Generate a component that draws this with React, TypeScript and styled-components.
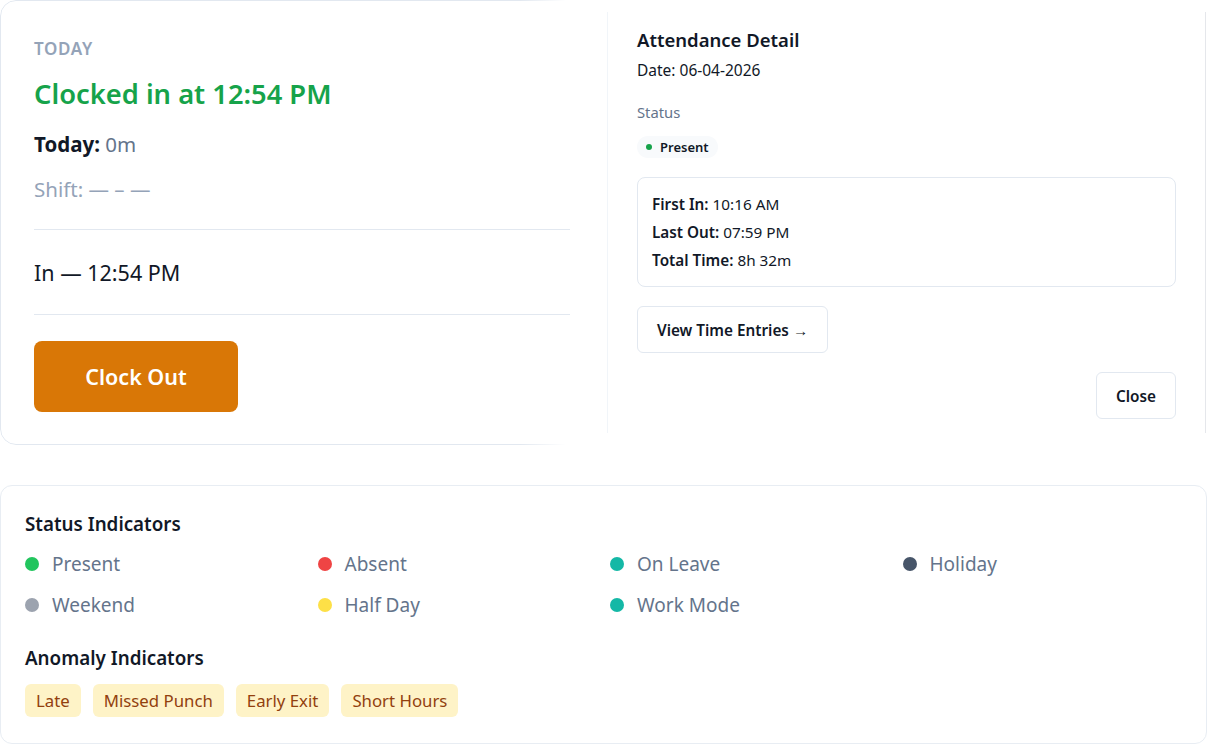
import styled, { createGlobalStyle } from 'styled-components';

const GlobalStyle = createGlobalStyle`
  html, body { margin: 0; padding: 0; background: #fff; }
  body { font-family: "Noto Sans", "Open Sans", sans-serif; color: #111827; }
  * { box-sizing: border-box; }
`;

const Page = styled.div`
  width: 1208px;
  height: 744px;
  overflow: hidden;
  display: flex;
  flex-direction: column;
  gap: 40px;
`;

const Top = styled.div`
  position: relative;
  height: 445px;
`;

const ClockCard = styled.section`
  position: relative;
  width: 600px;
  height: 445px;
  padding: 36px 30px 0 34px;
  display: flex;
  flex-direction: column;
  &::before {
    content: '';
    position: absolute;
    inset: 0;
    border: 1px solid #e2e8f0;
    border-radius: 16px;
    -webkit-mask-image: linear-gradient(to right, #000 520px, transparent 566px);
    mask-image: linear-gradient(to right, #000 520px, transparent 566px);
    pointer-events: none;
  }
`;

const Eyebrow = styled.div`
  font-size: 17px;
  font-weight: 600;
  letter-spacing: 0.04em;
  color: #94a3b8;
  text-transform: uppercase;
  line-height: 26px;
`;

const ClockedTitle = styled.h2`
  margin: 12px 0 0;
  font-size: 27.3px;
  font-weight: 600;
  color: #16a34a;
  line-height: 40px;
`;

const Line = styled.div<{ $muted?: boolean; $gap: number }>`
  margin-top: ${(p) => p.$gap}px;
  font-size: 20.5px;
  line-height: 34px;
  color: ${(p) => (p.$muted ? '#94a3b8' : '#111827')};
  b { font-weight: 700; color: #111827; }
  span { color: #64748b; }
`;

const Divider = styled.hr<{ $top?: number }>`
  margin: ${(p) => p.$top ?? 0}px 0 0;
  border: none;
  border-top: 1.5px solid #e2e8f0;
`;

const PunchRow = styled.div`
  height: 84px;
  display: flex;
  align-items: center;
  font-size: 21.5px;
  color: #111827;
`;

const ClockOutButton = styled.button`
  margin-top: 26px;
  width: 204px;
  height: 71px;
  border: none;
  border-radius: 8px;
  background: #d97706;
  color: #fff;
  font-family: inherit;
  font-size: 21.5px;
  font-weight: 600;
`;

const DetailPanel = styled.aside`
  position: absolute;
  left: 607px;
  top: 12px;
  width: 599px;
  height: 421px;
  background: #fff;
  border-left: 1px solid #f1f5f9;
  border-right: 1px solid #e5e7eb;
  padding: 14px 29px 0 29px;
  display: flex;
  flex-direction: column;
`;

const DetailTitle = styled.h3`
  margin: 0;
  font-size: 18.5px;
  font-weight: 600;
  line-height: 28px;
  color: #111827;
`;

const DateText = styled.div`
  margin-top: 5px;
  font-size: 15.5px;
  line-height: 22px;
`;

const Label = styled.div`
  margin-top: 20px;
  font-size: 14.8px;
  line-height: 22px;
  color: #64748b;
`;

const Badge = styled.span`
  margin-top: 13px;
  align-self: flex-start;
  display: inline-flex;
  align-items: center;
  gap: 8px;
  height: 22px;
  padding: 0 9px;
  border-radius: 999px;
  background: #f8fafc;
  font-size: 13px;
  font-weight: 600;
`;

const Dot = styled.i<{ $color: string; $size?: number }>`
  display: inline-block;
  width: ${(p) => p.$size ?? 6}px;
  height: ${(p) => p.$size ?? 6}px;
  border-radius: 50%;
  background: ${(p) => p.$color};
  flex: none;
`;

const InfoBox = styled.div`
  margin-top: 19px;
  height: 110px;
  border: 1.5px solid #e2e8f0;
  border-radius: 8px;
  padding: 12px 14px;
  display: flex;
  flex-direction: column;
  font-size: 15.3px;
  line-height: 28px;
  b { font-weight: 600; }
`;

const OutlineButton = styled.button`
  height: 47px;
  padding: 0 19px;
  background: #fff;
  border: 1.5px solid #e2e8f0;
  border-radius: 6px;
  font-family: inherit;
  font-size: 15.3px;
  font-weight: 600;
  color: #111827;
`;

const EntriesButton = styled(OutlineButton)`
  margin-top: 19px;
  align-self: flex-start;
`;

const CloseButton = styled(OutlineButton)`
  margin-top: 19px;
  align-self: flex-end;
  width: 80px;
  padding: 0;
`;

const LegendCard = styled.section`
  width: 1207px;
  border: 1px solid #e8edf3;
  border-radius: 12px;
  padding: 24px 27px 0 24px;
  height: 259px;
`;

const SectionTitle = styled.h4<{ $top?: number }>`
  margin: ${(p) => p.$top ?? 0}px 0 0;
  font-size: 18.8px;
  font-weight: 600;
  line-height: 28px;
  color: #111827;
`;

const LegendGrid = styled.div`
  margin-top: 12px;
  display: grid;
  grid-template-columns: repeat(4, 1fr);
  column-gap: 16px;
  row-gap: 13px;
`;

const LegendItem = styled.div`
  display: flex;
  align-items: center;
  gap: 13px;
  height: 28px;
  font-size: 19px;
  color: #64748b;
`;

const Chips = styled.div`
  margin-top: 12px;
  display: flex;
  gap: 12px;
`;

const Chip = styled.span`
  height: 33px;
  display: inline-flex;
  align-items: center;
  padding: 0 11px;
  border-radius: 6px;
  background: #fef3c7;
  color: #92400e;
  font-size: 16.8px;
`;

const statuses = [
  { label: 'Present', color: '#22c55e' },
  { label: 'Absent', color: '#ef4444' },
  { label: 'On Leave', color: '#14b8a6' },
  { label: 'Holiday', color: '#475569' },
  { label: 'Weekend', color: '#9ca3af' },
  { label: 'Half Day', color: '#fde047' },
  { label: 'Work Mode', color: '#14b8a6' },
];

const anomalies = ['Late', 'Missed Punch', 'Early Exit', 'Short Hours'];

export default function App() {
  return (
    <>
      <GlobalStyle />
      <Page>
        <Top>
          <ClockCard>
            <Eyebrow>Today</Eyebrow>
            <ClockedTitle>Clocked in at 12:54 PM</ClockedTitle>
            <Line $gap={13}>
              <b>Today:</b> <span>0m</span>
            </Line>
            <Line $muted $gap={11}>Shift: — – —</Line>
            <Divider $top={23} />
            <PunchRow>In — 12:54 PM</PunchRow>
            <Divider />
            <ClockOutButton>Clock Out</ClockOutButton>
          </ClockCard>

          <DetailPanel>
            <DetailTitle>Attendance Detail</DetailTitle>
            <DateText>Date: 06-04-2026</DateText>
            <Label>Status</Label>
            <Badge>
              <Dot $color="#16a34a" />
              Present
            </Badge>
            <InfoBox>
              <div><b>First In:</b> 10:16 AM</div>
              <div><b>Last Out:</b> 07:59 PM</div>
              <div><b>Total Time:</b> 8h 32m</div>
            </InfoBox>
            <EntriesButton>View Time Entries →</EntriesButton>
            <CloseButton>Close</CloseButton>
          </DetailPanel>
        </Top>

        <LegendCard>
          <SectionTitle>Status Indicators</SectionTitle>
          <LegendGrid>
            {statuses.map((s) => (
              <LegendItem key={s.label}>
                <Dot $color={s.color} $size={14} />
                {s.label}
              </LegendItem>
            ))}
          </LegendGrid>
          <SectionTitle $top={25}>Anomaly Indicators</SectionTitle>
          <Chips>
            {anomalies.map((a) => (
              <Chip key={a}>{a}</Chip>
            ))}
          </Chips>
        </LegendCard>
      </Page>
    </>
  );
}
